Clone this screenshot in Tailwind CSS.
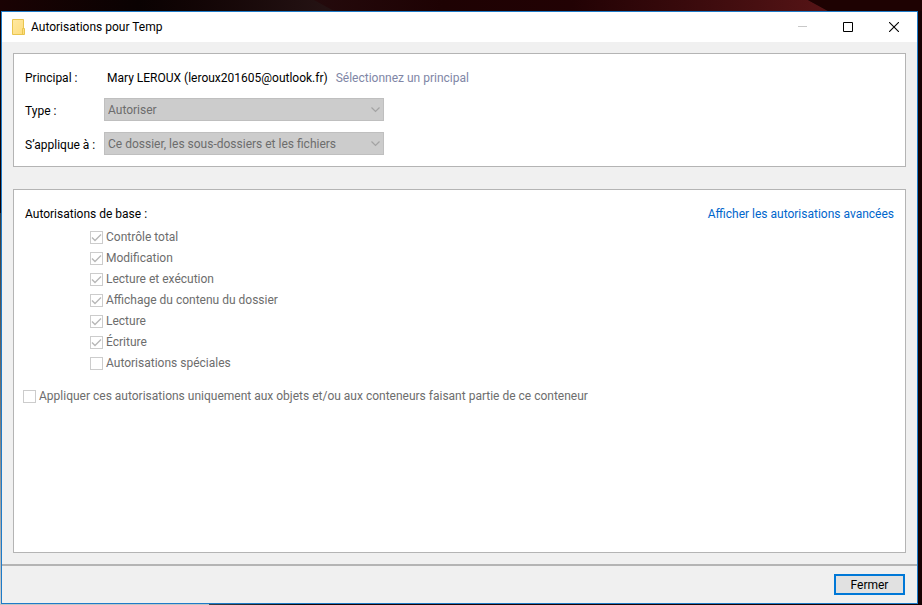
<!DOCTYPE html>
<html lang="fr">
<head>
    <meta charset="UTF-8">
    <meta name="viewport" content="width=device-width, initial-scale=1.0">
    <title>Autorisations pour Temp</title>
    <script src="https://cdn.jsdelivr.net/npm/@tailwindcss/browser@4"></script>
</head>
<body class="relative flex flex-col h-screen overflow-hidden pt-[11px] pl-px pr-1 pb-px bg-linear-to-r from-[#120203] via-[#1c0204] to-[#160203] font-[Roboto,'Open_Sans',sans-serif] text-xs text-black">
    <!-- Desktop behind the window -->
    <div class="absolute inset-x-0 top-0 h-[11px] bg-linear-to-r from-[#1a0203] from-0% via-[#0a0202] via-15% to-[#241213] to-35%"></div>
    <svg class="absolute top-0 left-0 w-full h-[11px]" viewBox="0 0 922 11" preserveAspectRatio="none" aria-hidden="true">
        <defs>
            <linearGradient id="glow" x1="0" x2="1">
                <stop offset="0" stop-color="#240a0c"/>
                <stop offset="0.25" stop-color="#1e0203"/>
                <stop offset="0.5" stop-color="#220204"/>
                <stop offset="1" stop-color="#561416"/>
            </linearGradient>
        </defs>
        <path d="M314 0H808L828 11H334Z" fill="url(#glow)"/>
        <path d="M808 0H922V11H828Z" fill="#1e0202"/>
    </svg>
    <div class="absolute left-0 top-[213px] bottom-0 w-px bg-linear-to-b from-[#3a3a3a] via-[#777777] to-[#d0d0d0]"></div>
    <div class="absolute left-0 bottom-0 w-[209px] h-px bg-[#c4c4c4]"></div>
    <div class="absolute left-[209px] bottom-0 w-24 h-px bg-linear-to-r from-[#3a4048] to-[#08080a]"></div>

    <main class="relative flex flex-col flex-1 border border-[#1e7bc8] bg-[#f0f0f0]">
        <header class="flex items-center h-[30px] bg-white">
            <svg class="ml-2.5 w-[13px] h-4" viewBox="0 0 13 16" aria-hidden="true">
                <defs>
                    <linearGradient id="folder" x1="0" y1="0" x2="1" y2="1">
                        <stop offset="0" stop-color="#ffe9a2"/>
                        <stop offset="1" stop-color="#fddc7c"/>
                    </linearGradient>
                </defs>
                <path d="M0.5 0.5H11.5V9.5H12.5V15.5H0.5Z" fill="url(#folder)" stroke="#e9c54e"/>
                <path d="M10.5 15V9.5H12" fill="none" stroke="#e9c54e"/>
            </svg>
            <h1 class="ml-1.5 flex-1">Autorisations pour Temp</h1>
            <button type="button" disabled aria-label="Réduire" class="flex items-center justify-center w-[46px] h-full">
                <svg class="w-2.5 h-2.5" viewBox="0 0 10 10"><path d="M1 4.5H10" stroke="#c8c8c8"/></svg>
            </button>
            <button type="button" aria-label="Agrandir" class="flex items-center justify-center w-[46px] h-full">
                <svg class="w-2.5 h-2.5" viewBox="0 0 10 10"><path d="M0.5 0.5H9.5V9.5H0.5Z" fill="none" stroke="#000"/></svg>
            </button>
            <button type="button" aria-label="Fermer la fenêtre" class="flex items-center justify-center w-[46px] h-full">
                <svg class="w-2.5 h-2.5" viewBox="0 0 10 10"><path d="M0 0L10 10M10 0L0 10" stroke="#000" stroke-width="1.1"/></svg>
            </button>
        </header>

        <div class="flex flex-col flex-1 gap-[22px] px-[11px] py-[11px]">
            <section class="h-[114px] border border-[#b4b4b4] bg-white px-[11px] pt-[13px]">
                <div class="grid grid-cols-[79px_1fr] gap-y-[11px] items-center">
                    <span class="pt-0.5">Principal :</span>
                    <div class="flex items-center gap-2 h-[20px] pl-[3px] pt-0.5">
                        <span>Mary LEROUX (leroux201605@outlook.fr)</span>
                        <a href="#" class="text-[#8086a6]">Sélectionnez un principal</a>
                    </div>
                    <label for="type" class="pt-0.5">Type :</label>
                    <div class="relative w-[280px]">
                        <select id="type" disabled class="block w-full h-[23px] appearance-none border border-[#bfbfbf] bg-[#cccccc] px-[3px] text-[#6d6d6d] opacity-100">
                            <option>Autoriser</option>
                        </select>
                        <svg class="absolute right-1 top-2 w-[9px] h-[7px]" viewBox="0 0 9 7" aria-hidden="true"><path d="M0.5 1.5L4.5 5.5L8.5 1.5" fill="none" stroke="#a3a3a3" stroke-width="1.2"/></svg>
                    </div>
                    <label for="scope" class="pt-0.5">S’applique à :</label>
                    <div class="relative w-[280px]">
                        <select id="scope" disabled class="block w-full h-[23px] appearance-none border border-[#bfbfbf] bg-[#cccccc] px-[3px] text-[#6d6d6d] opacity-100">
                            <option>Ce dossier, les sous-dossiers et les fichiers</option>
                        </select>
                        <svg class="absolute right-1 top-2 w-[9px] h-[7px]" viewBox="0 0 9 7" aria-hidden="true"><path d="M0.5 1.5L4.5 5.5L8.5 1.5" fill="none" stroke="#a3a3a3" stroke-width="1.2"/></svg>
                    </div>
                </div>
            </section>

            <section class="flex-1 border border-[#b4b4b4] bg-white px-[11px] pt-4">
                <div class="flex justify-between">
                    <h2>Autorisations de base :</h2>
                    <a href="#" class="text-[#0066cc]">Afficher les autorisations avancées</a>
                </div>
                <div id="permissions" class="mt-[5px] pl-[65px] text-[#6d6d6d]"></div>
                <label class="flex items-center gap-[3px] h-[21px] mt-3 -ml-0.5 text-[#6d6d6d]">
                    <input type="checkbox" disabled class="appearance-none w-[13px] h-[13px] border border-[#cccccc] bg-white">
                    <span class="pb-0.5">Appliquer ces autorisations uniquement aux objets et/ou aux conteneurs faisant partie de ce conteneur</span>
                </label>
            </section>
        </div>

        <footer class="flex justify-end h-[39px] border-t-2 border-[#b4b4b4] pt-2 pr-3">
            <button type="button" class="w-[71px] h-[21px] border-2 border-[#0078d7] bg-[#e1e1e1] leading-4">Fermer</button>
        </footer>
    </main>

    <script>
        const permissions = [
            ['Contrôle total', true],
            ['Modification', true],
            ['Lecture et exécution', true],
            ['Affichage du contenu du dossier', true],
            ['Lecture', true],
            ['Écriture', true],
            ['Autorisations spéciales', false],
        ];

        document.getElementById('permissions').innerHTML = permissions.map(([name, checked]) => `
            <label class="flex items-center gap-[3px] h-[21px]">
                <span class="grid">
                    <input type="checkbox" disabled ${checked ? 'checked' : ''} class="peer col-start-1 row-start-1 appearance-none w-[13px] h-[13px] border border-[#cccccc] bg-white">
                    <svg class="hidden peer-checked:block col-start-1 row-start-1 w-[13px] h-[13px]" viewBox="0 0 13 13"><path d="M2 6.5L5 9.5L11 3.5" fill="none" stroke="#b8b8b8" stroke-width="1.4"/></svg>
                </span>
                <span class="pb-0.5">${name}</span>
            </label>
        `).join('');
    </script>
</body>
</html>
